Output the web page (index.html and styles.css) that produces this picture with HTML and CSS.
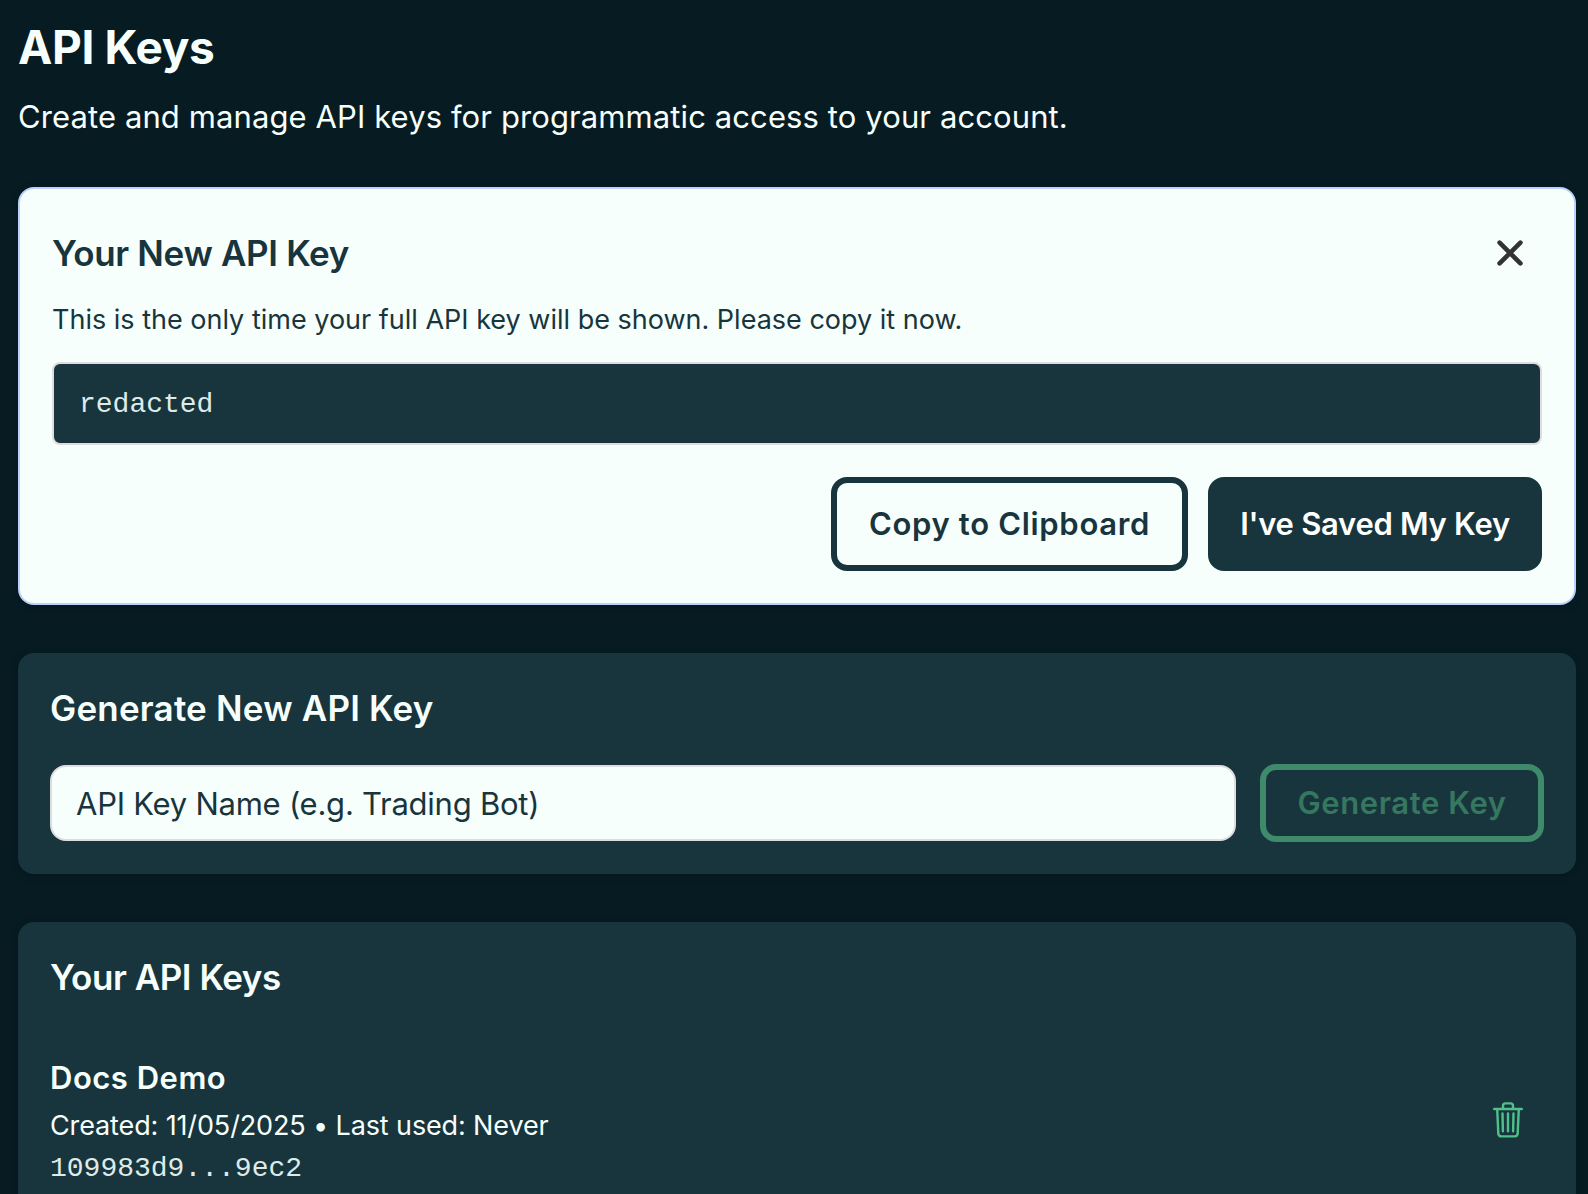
FILE: index.html
```html
<!DOCTYPE html>
<html lang="en">
<head>
<meta charset="utf-8">
<title>API Keys</title>
<link rel="stylesheet" href="styles.css">
</head>
<body>
<main class="page">
  <header class="page-header">
    <h1 class="page-title">API Keys</h1>
    <p class="page-subtitle">Create and manage API keys for programmatic access to your account.</p>
  </header>

  <section class="card card-new">
    <div class="card-head">
      <h2 class="heading heading-new">Your New API Key</h2>
      <button class="icon-button close" aria-label="Close">
        <svg width="28" height="28" viewBox="0 0 28 28" fill="none" stroke="#333" stroke-width="4.6" stroke-linecap="round"><path d="M3.6 3.6 24.4 24.4M24.4 3.6 3.6 24.4"/></svg>
      </button>
    </div>
    <p class="notice">This is the only time your full API key will be shown. Please copy it now.</p>
    <code class="key-box">redacted</code>
    <div class="actions">
      <button class="button outline">Copy to Clipboard</button>
      <button class="button solid">I've Saved My Key</button>
    </div>
  </section>

  <section class="card">
    <h2 class="heading heading-generate">Generate New API Key</h2>
    <div class="form-row">
      <input class="name-input" type="text" placeholder="API Key Name (e.g. Trading Bot)">
      <button class="button generate" disabled>Generate Key</button>
    </div>
  </section>

  <section class="card card-list">
    <h2 class="heading heading-list">Your API Keys</h2>
    <div class="key-item">
      <div class="key-info">
        <h3 class="key-name">Docs Demo</h3>
        <p class="key-meta">Created: 11/05/2025 • Last used: Never</p>
        <code class="key-value">109983d9...9ec2</code>
      </div>
      <button class="icon-button delete" aria-label="Delete key">
        <svg width="30" height="36" viewBox="0 0 30 36" fill="none" stroke="#50c08a" stroke-width="2.4" stroke-linecap="round" stroke-linejoin="round"><path d="M1.2 7H28.8M4.2 7 5.3 31.4Q5.5 34.4 8.3 34.4H21.7Q24.5 34.4 24.7 31.4L25.8 7M10 7V3.8Q10 1.4 12.4 1.4H17.6Q20 1.4 20 3.8V7M9.5 11.5 9.9 29.3M15 11.5V29.3M20.5 11.5 20.1 29.3"/></svg>
      </button>
    </div>
  </section>
</main>
</body>
</html>
```
FILE: styles.css
```css
* {
  box-sizing: border-box;
}

body {
  margin: 0;
  height: 1194px;
  overflow: hidden;
  background: #071b22;
  color: #f6fffc;
  font-family: Inter, "Liberation Sans", sans-serif;
}

h1, h2, h3, p {
  margin: 0;
}

button, input {
  font-family: inherit;
  margin: 0;
}

.page {
  display: flex;
  flex-direction: column;
  gap: 48px;
  padding: 18px 12px 0 18px;
}

.page-header {
  display: flex;
  flex-direction: column;
  gap: 17px;
  margin-bottom: -2px;
}

.page-title {
  font-size: 46px;
  font-weight: 700;
  line-height: 58px;
  letter-spacing: -0.35px;
}

.page-subtitle {
  font-size: 31px;
  line-height: 48px;
  letter-spacing: 0.1px;
}

.card {
  padding: 32px;
  border-radius: 16px;
  background: #18353d;
  box-shadow: 0 2px 8px rgba(0, 0, 0, 0.15);
}

.card-new {
  border: 2px solid #b9d2fb;
  background: #f6fffc;
  color: #18353d;
}

.card-head {
  display: flex;
  align-items: center;
  justify-content: space-between;
  height: 64px;
}

.heading {
  font-size: 35px;
  font-weight: 600;
  line-height: 46px;
}

.heading-new {
  letter-spacing: -0.33px;
}

.heading-generate {
  letter-spacing: 0.2px;
}

.heading-list {
  letter-spacing: -0.45px;
}

.icon-button {
  display: flex;
  padding: 0;
  border: 0;
  background: none;
}

.close {
  margin-right: 18px;
}

.notice {
  margin-top: 13px;
  font-size: 27px;
  line-height: 43px;
}

.key-box,
.key-value {
  display: block;
  font-family: "Liberation Mono", monospace;
  font-size: 28px;
  color: #dfebe8;
}

.key-box {
  margin-top: 21px;
  padding: 20px 24px 17px 25px;
  border: 2px solid #dddddf;
  border-radius: 8px;
  background: #18353d;
  line-height: 42px;
}

.actions {
  display: flex;
  justify-content: flex-end;
  gap: 20px;
  margin-top: 32px;
}

.button {
  height: 94px;
  padding: 0 0 2px;
  border: 6px solid #18353d;
  border-radius: 16px;
  font-size: 31px;
  font-weight: 600;
  text-align: center;
  white-space: nowrap;
}

.outline {
  width: 357px;
  background: #f6fffc;
  color: #18353d;
  letter-spacing: 0.68px;
}

.solid {
  width: 334px;
  background: #18353d;
  color: #ffffff;
  letter-spacing: -0.28px;
}

.form-row {
  display: flex;
  align-items: center;
  gap: 24px;
  margin-top: 33px;
}

.name-input {
  flex: 1;
  height: 76px;
  padding: 0 24px;
  border: 2px solid #dddddf;
  border-radius: 16px;
  background: #f6fffc;
  font-size: 31px;
  letter-spacing: -0.25px;
}

.name-input::placeholder {
  color: #18353d;
  opacity: 1;
}

.generate {
  width: 284px;
  height: 78px;
  border-color: #3e8a6a;
  background: none;
  color: #35775f;
  letter-spacing: 0.6px;
}

.key-item {
  display: flex;
  align-items: center;
  justify-content: space-between;
  margin-top: 53px;
}

.key-name {
  font-size: 31px;
  font-weight: 600;
  line-height: 50px;
  letter-spacing: 0.5px;
}

.key-meta {
  margin-top: 1px;
  font-size: 27px;
  line-height: 43px;
  letter-spacing: -0.13px;
}

.key-value {
  margin-top: 1px;
  line-height: 42px;
}

.delete {
  margin: 0 21px 4px 0;
}
```
